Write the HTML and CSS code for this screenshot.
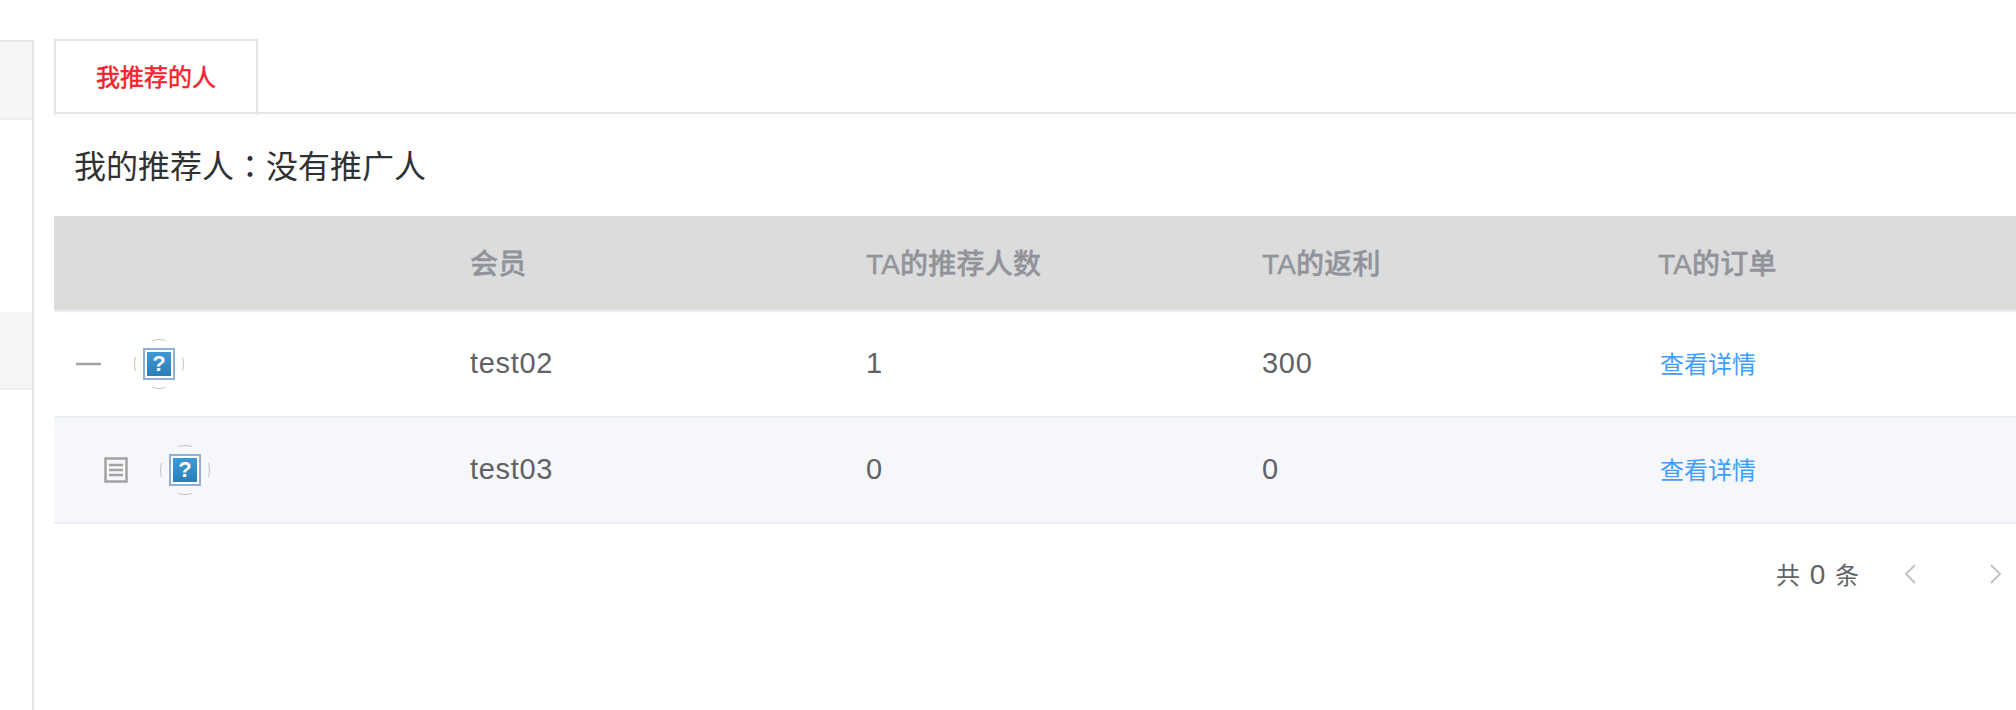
FILE: index.html
```html
<!DOCTYPE html>
<html lang="zh-CN">
<head>
  <meta charset="UTF-8">
  <title>我推荐的人</title>
  <link rel="stylesheet" href="styles.css">
</head>
<body>
  <aside class="sidebar">
    <div class="side-item side-item-first"></div>
    <div class="side-item side-item-second"></div>
  </aside>
  <main class="content">
    <div class="tabs">
      <div class="tab">我推荐的人</div>
    </div>
    <p class="referrer">我的推荐人<span class="colon" lang="zh-TW">：</span>没有推广人</p>
    <table class="members">
      <thead>
        <tr>
          <th class="col-tree"></th>
          <th>会员</th>
          <th>TA的推荐人数</th>
          <th>TA的返利</th>
          <th>TA的订单</th>
          <th></th>
        </tr>
      </thead>
      <tbody>
        <tr>
          <td>
            <div class="tree-cell">
              <svg class="toggle" width="26" height="26" viewBox="0 0 26 26"><path d="M0 13h25" stroke="#a3a3a3" stroke-width="2.500" fill="none"/></svg>
              <span class="avatar"><span class="avatar-box">?</span></span>
            </div>
          </td>
          <td>test02</td>
          <td>1</td>
          <td>300</td>
          <td><a class="detail" href="#">查看详情</a></td>
          <td></td>
        </tr>
        <tr class="child-row">
          <td>
            <div class="tree-cell tree-cell-child">
              <svg class="toggle" width="24" height="26" viewBox="0 0 24 26"><path d="M1.500 1.500h21v23h-21z" stroke="#a3a3a3" stroke-width="2.500" fill="none"/><path d="M5 8h14M5 13h14M5 18h14" stroke="#a3a3a3" stroke-width="2.500" fill="none"/></svg>
              <span class="avatar"><span class="avatar-box">?</span></span>
            </div>
          </td>
          <td>test03</td>
          <td>0</td>
          <td>0</td>
          <td><a class="detail" href="#">查看详情</a></td>
          <td></td>
        </tr>
      </tbody>
    </table>
    <div class="pager">
      <span class="total">共 <span class="total-num">0</span> 条</span>
      <svg class="arrow" width="12" height="20" viewBox="0 0 12 20"><path d="M11 1 2 10l9 9" stroke="#c0c4cc" stroke-width="2" fill="none"/></svg>
      <svg class="arrow arrow-next" width="12" height="20" viewBox="0 0 12 20"><path d="M1 1l9 9-9 9" stroke="#c0c4cc" stroke-width="2" fill="none"/></svg>
    </div>
  </main>
</body>
</html>
```

FILE: styles.css
```css
html, body { margin: 0; height: 710px; overflow: hidden; background: #fff; }
body { display: flex; font-family: "Liberation Sans", "Noto Sans CJK SC", sans-serif; color: #606266; }

.sidebar { width: 32px; margin-top: 40px; border: 2px solid #e6e6e6; border-width: 2px 2px 0 0; flex-shrink: 0; }
.side-item { height: 76px; background: #f5f5f5; border-bottom: 2px solid #eeeeee; }
.side-item-second { margin-top: 192px; }

.content { flex: 1; min-width: 0; margin-left: 20px; padding-top: 39px; overflow: hidden; }

.tabs { height: 73px; border-bottom: 2px solid #e6e6e6; }
.tab { width: 200px; height: 73px; border: 2px solid #e6e6e6; border-bottom: 2px solid #fff; text-align: center; line-height: 73px; font-size: 24px; color: #f5222d; -webkit-text-stroke: 0.5px #f5222d; }

.referrer { margin: 0; padding-left: 20px; height: 102px; line-height: 106px; font-size: 32px; color: #303133; }
.colon { font-family: "Noto Sans CJK TC", sans-serif; line-height: 0; }

.members { width: 1962px; border-collapse: collapse; table-layout: fixed; font-size: 29px; }
.members th { height: 92px; padding: 0 16px 2px; background: #dcdcdc; border-bottom: 2px solid #ebeef5; text-align: left; font-size: 28px; font-weight: 500; letter-spacing: 0.2px; color: #909399; -webkit-text-stroke: 0.4px #909399; }
.members td { height: 102px; padding: 0 16px 2px; border-bottom: 2px solid #ebeef5; letter-spacing: 0.7px; }
.col-tree { width: 400px; box-sizing: border-box; }
.child-row td { background: #f5f7fa; }
.members th:nth-child(n+2):nth-child(-n+5) { width: 364px; }

.tree-cell { display: flex; align-items: center; padding-left: 6px; margin-top: 2px; }
.tree-cell-child { padding-left: 34px; }
.toggle { flex-shrink: 0; margin-right: 32px; }

.avatar { width: 50px; height: 50px; display: flex; align-items: center; justify-content: center; position: relative; }
.avatar::before { content: ""; position: absolute; inset: 0; border-radius: 50%; border: 1px solid #c4c4c4; clip-path: polygon(36% 0, 64% 0, 64% 8%, 36% 8%, 36% 92%, 64% 92%, 64% 100%, 36% 100%); }
.avatar::after { content: ""; position: absolute; inset: 0; border-radius: 50%; border: 1px solid #c4c4c4; clip-path: polygon(0 36%, 8% 36%, 8% 64%, 92% 64%, 92% 36%, 100% 36%, 100% 64%, 0 64%); }
.avatar-box { width: 24px; height: 24px; border: 2px solid #fff; outline: 2px solid #8fb0d3; background: linear-gradient(#3d9ad6, #2a7fb8); color: #fff; font-size: 22px; font-weight: bold; line-height: 24px; letter-spacing: 0; text-align: center; }

.detail { color: #409eff; font-size: 24px; letter-spacing: 0; text-decoration: none; margin-left: 2px; vertical-align: 1px; }

.pager { display: flex; justify-content: flex-end; align-items: center; height: 100px; padding-right: 14px; }
.total { font-size: 24px; word-spacing: 3px; white-space: nowrap; margin-bottom: 2px; }
.total-num { font-size: 28px; }
.arrow { margin-left: 45px; }
.arrow-next { margin-left: 74px; }
```
